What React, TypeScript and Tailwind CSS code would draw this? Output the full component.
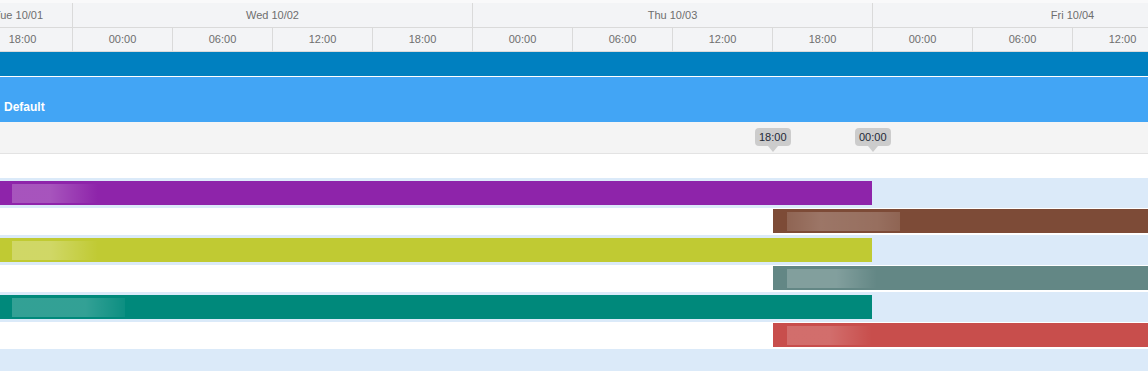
const days = [
  { label: "Tue 10/01", w: "w-[108px]" },
  { label: "Wed 10/02", w: "w-[400px]" },
  { label: "Thu 10/03", w: "w-[400px]" },
  { label: "Fri 10/04", w: "w-[400px]" },
];

const hours = ["12:00", "18:00", "00:00", "06:00", "12:00", "18:00", "00:00", "06:00", "12:00", "18:00", "00:00", "06:00", "12:00"];

type Row = {
  light: boolean;
  color: string;
  start: string;
  width: string;
  hl: string;
};

const rows: Row[] = [
  { light: true, color: "bg-[#8e24aa]", start: "ml-0", width: "w-[872px]", hl: "left-[12px] w-[86px] bg-[linear-gradient(to_right,rgba(255,255,255,0.22)_45%,rgba(255,255,255,0))]" },
  { light: false, color: "bg-[#7d4b37]", start: "ml-[773px]", width: "w-[400px]", hl: "left-[14px] w-[113px] bg-[linear-gradient(to_right,rgba(255,255,255,0.14),rgba(255,255,255,0.24)_30%,rgba(255,255,255,0.2)_80%,rgba(255,255,255,0.14))]" },
  { light: true, color: "bg-[#c0ca33]", start: "ml-0", width: "w-[872px]", hl: "left-[12px] w-[86px] bg-[linear-gradient(to_right,rgba(255,255,255,0.25)_45%,rgba(255,255,255,0))]" },
  { light: false, color: "bg-[#638785]", start: "ml-[773px]", width: "w-[400px]", hl: "left-[14px] w-[90px] bg-[linear-gradient(to_right,rgba(255,255,255,0.2)_55%,rgba(255,255,255,0))]" },
  { light: true, color: "bg-[#00897b]", start: "ml-0", width: "w-[872px]", hl: "left-[12px] w-[113px] bg-[linear-gradient(to_right,rgba(255,255,255,0.2)_65%,rgba(255,255,255,0.05))]" },
  { light: false, color: "bg-[#c84e4c]", start: "ml-[773px]", width: "w-[400px]", hl: "left-[14px] w-[85px] bg-[linear-gradient(to_right,rgba(255,255,255,0.18)_50%,rgba(255,255,255,0))]" },
];

function Marker({ label, left }: { label: string; left: string }) {
  return (
    <div className={`absolute top-[6px] ${left} flex flex-col items-center`}>
      <div className="h-[18px] px-[4px] rounded-[4px] bg-[#cccccc] text-[11px] leading-[18px] text-[#1f2937]">
        {label}
      </div>
      <div className="w-0 h-0 border-x-[5px] border-x-transparent border-t-[6px] border-t-[#cccccc]" />
    </div>
  );
}

export default function App() {
  return (
    <div className="w-[1148px] h-[371px] overflow-hidden bg-white font-['Liberation_Sans',Arial,sans-serif]">
      {/* time header */}
      <div className="h-[3px] bg-[#f9f9fa]" />
      <div className="h-[25px] flex ml-[-36px] bg-[#f3f4f6] border-b border-[#dadada]">
        {days.map((d) => (
          <div
            key={d.label}
            className={`${d.w} shrink-0 border-l border-[#dadada] flex items-center justify-center text-[11px] text-[#6e6e6e]`}
          >
            {d.label}
          </div>
        ))}
      </div>
      <div className="h-[24px] flex ml-[-128px] bg-[#f3f4f6] border-b border-[#dadada]">
        {hours.map((h, i) => (
          <div
            key={i}
            className="w-[100px] shrink-0 border-l border-[#dadada] flex items-center justify-center text-[11px] text-[#6e6e6e]"
          >
            {h}
          </div>
        ))}
      </div>

      {/* group header */}
      <div className="h-[24px] bg-[#0080c0]" />
      <div className="h-px bg-white" />
      <div className="h-[45px] bg-[#42a5f5] flex items-end pb-[6px] pl-[4px] text-[12px] font-bold text-white">
        Default
      </div>

      {/* markers row */}
      <div className="relative h-[32px] bg-[#f4f4f4] border-b border-[#e3e3e3]">
        <Marker label="18:00" left="left-[755px]" />
        <Marker label="00:00" left="left-[855px]" />
      </div>
      <div className="h-[24px] bg-white" />

      {/* events */}
      {rows.map((r, i) => (
        <div
          key={i}
          className={`flex ${r.light ? "h-[30px] pt-[3px] bg-[#dbeaf9]" : "h-[27px] pt-[1px] bg-white"}`}
        >
          <div className={`relative h-[24px] shrink-0 ${r.start} ${r.width} ${r.color}`}>
            <div className={`absolute top-[3px] bottom-[2px] ${r.hl}`} />
          </div>
        </div>
      ))}
      <div className="h-[30px] bg-[#dbeaf9]" />
    </div>
  );
}
